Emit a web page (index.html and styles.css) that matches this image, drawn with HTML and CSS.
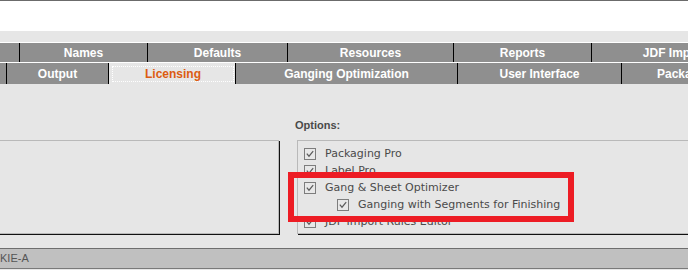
FILE: index.html
```html
<!DOCTYPE html>
<html lang="en">
  <head>
    <meta charset="UTF-8" />
    <title>Preferences - Licensing</title>
    <link rel="stylesheet" href="styles.css">
  </head>
  <body>
    <div class="top"></div>

    <div class="tabs">
      <div class="tab-row row1">
        <div class="tab first1">Devices</div>
        <div class="tab w128">Names</div>
        <div class="tab w140">Defaults</div>
        <div class="tab w166">Resources</div>
        <div class="tab w138">Reports</div>
        <div class="tab w166">JDF Import</div>
      </div>
      <div class="tab-row row2">
        <div class="tab first2">Input</div>
        <div class="tab w102">Output</div>
        <div class="tab w127 selected"><span class="focus">Licensing</span></div>
        <div class="tab w222">Ganging Optimization</div>
        <div class="tab w164">User Interface</div>
        <div class="tab w131">Packaging</div>
      </div>
    </div>

    <div class="content">
      <div class="license-box"></div>
      <div class="options">
        <div class="options-label">Options:</div>
        <div class="options-box">
          <div class="opt">
            <svg class="cb" viewBox="0 0 12 12"><rect x="0.5" y="0.5" width="11" height="11"/><path d="M2.8 5.6l2.2 2.6 4.2-5"/></svg>
            <span>Packaging Pro</span>
          </div>
          <div class="opt">
            <svg class="cb" viewBox="0 0 12 12"><rect x="0.5" y="0.5" width="11" height="11"/><path d="M2.8 5.6l2.2 2.6 4.2-5"/></svg>
            <span>Label Pro</span>
          </div>
          <div class="opt">
            <svg class="cb" viewBox="0 0 12 12"><rect x="0.5" y="0.5" width="11" height="11"/><path d="M2.8 5.6l2.2 2.6 4.2-5"/></svg>
            <span>Gang &amp; Sheet Optimizer</span>
          </div>
          <div class="opt sub">
            <svg class="cb" viewBox="0 0 12 12"><rect x="0.5" y="0.5" width="11" height="11"/><path d="M2.8 5.6l2.2 2.6 4.2-5"/></svg>
            <span>Ganging with Segments for Finishing</span>
          </div>
          <div class="opt">
            <svg class="cb" viewBox="0 0 12 12"><rect x="0.5" y="0.5" width="11" height="11"/><path d="M2.8 5.6l2.2 2.6 4.2-5"/></svg>
            <span>JDF Import Rules Editor</span>
          </div>
        </div>
      </div>
    </div>

    <div class="status">KIE-A</div>

    <!-- annotation drawn over the options -->
    <div class="highlight"></div>
  </body>
</html>
```

FILE: styles.css
```css
body {
  margin: 0;
  width: 688px;
  height: 270px;
  overflow: hidden;
  background-color: #e6e6e6;
  font-family: "Liberation Sans", Arial, sans-serif;
}

.top {
  height: 30px;
  background-color: #fff;
  border-top: 1px solid #6b6b6b;
}

.tabs {
  padding-top: 11px;
}

.tab-row {
  display: flex;
  border-top: 1px solid #fff;
}

.row1 .tab {
  height: 19px;
  line-height: 20px;
}

.row2 .tab {
  height: 21px;
  line-height: 22px;
}

.tab {
  flex: none;
  box-sizing: border-box;
  background-color: #8f8f8f;
  border-right: 1px solid #000;
  color: #fff;
  font-size: 12px;
  font-weight: bold;
  text-align: center;
  white-space: nowrap;
  overflow: hidden;
}

.first1 { width: 120px; margin-left: -100px; }
.first2 { width: 107px; margin-left: -100px; }
.w102 { width: 102px; }
.w127 { width: 127px; }
.w128 { width: 128px; }
.w131 { width: 131px; }
.w138 { width: 138px; }
.w140 { width: 140px; }
.w164 { width: 164px; }
.w166 { width: 166px; }
.w222 { width: 222px; }

.tab.selected {
  background-color: #e6e6e6;
  color: #dc5c12;
  padding: 3px 1px 1px 3px;
  line-height: 14px;
}

.focus {
  display: block;
  height: 16px;
  box-sizing: border-box;
  border: 1px dotted #fff;
  line-height: 15px;
}

.content {
  display: flex;
  align-items: flex-start;
  height: 164px;
  box-sizing: border-box;
  padding-top: 35px;
}

.license-box {
  flex: none;
  width: 299px;
  height: 94px;
  margin-left: -20px;
  margin-top: 21px;
  box-sizing: border-box;
  border: 1px solid #b9b9b9;
  box-shadow: 1px 1px 0 #111;
}

.options {
  flex: none;
  margin-left: 16px;
}

.options-label {
  font-size: 11px;
  font-weight: bold;
  color: #4a4a4a;
  line-height: 13px;
  height: 13px;
  margin-bottom: 8px;
}

.options-box {
  margin-left: 2px;
  width: 420px;
  height: 94px;
  box-sizing: border-box;
  border: 1px solid #b9b9b9;
  box-shadow: 1px 1px 0 #111;
  padding: 4px 0 0 6px;
}

.opt {
  display: flex;
  align-items: center;
  height: 17px;
  font-family: "DejaVu Sans", sans-serif;
  font-size: 11px;
  color: #4a4a4a;
  white-space: nowrap;
}

.opt.sub {
  padding-left: 33px;
}

.cb {
  width: 12px;
  height: 12px;
  flex: none;
  margin-right: 9px;
}

.cb rect {
  fill: #e8e8e8;
  stroke: #7d7d7d;
}

.cb path {
  fill: none;
  stroke: #5c5c5c;
  stroke-width: 1.2;
}

.status {
  height: 19px;
  line-height: 19px;
  background-color: #c0c0c0;
  border-top: 1px solid #6e6e6e;
  border-bottom: 1px solid #7a7a7a;
  font-size: 11px;
  color: #555;
}

.highlight {
  position: absolute;
  left: 288px;
  top: 172px;
  width: 286px;
  height: 50px;
  box-sizing: border-box;
  border: 6px solid #ed1c24;
}
```
